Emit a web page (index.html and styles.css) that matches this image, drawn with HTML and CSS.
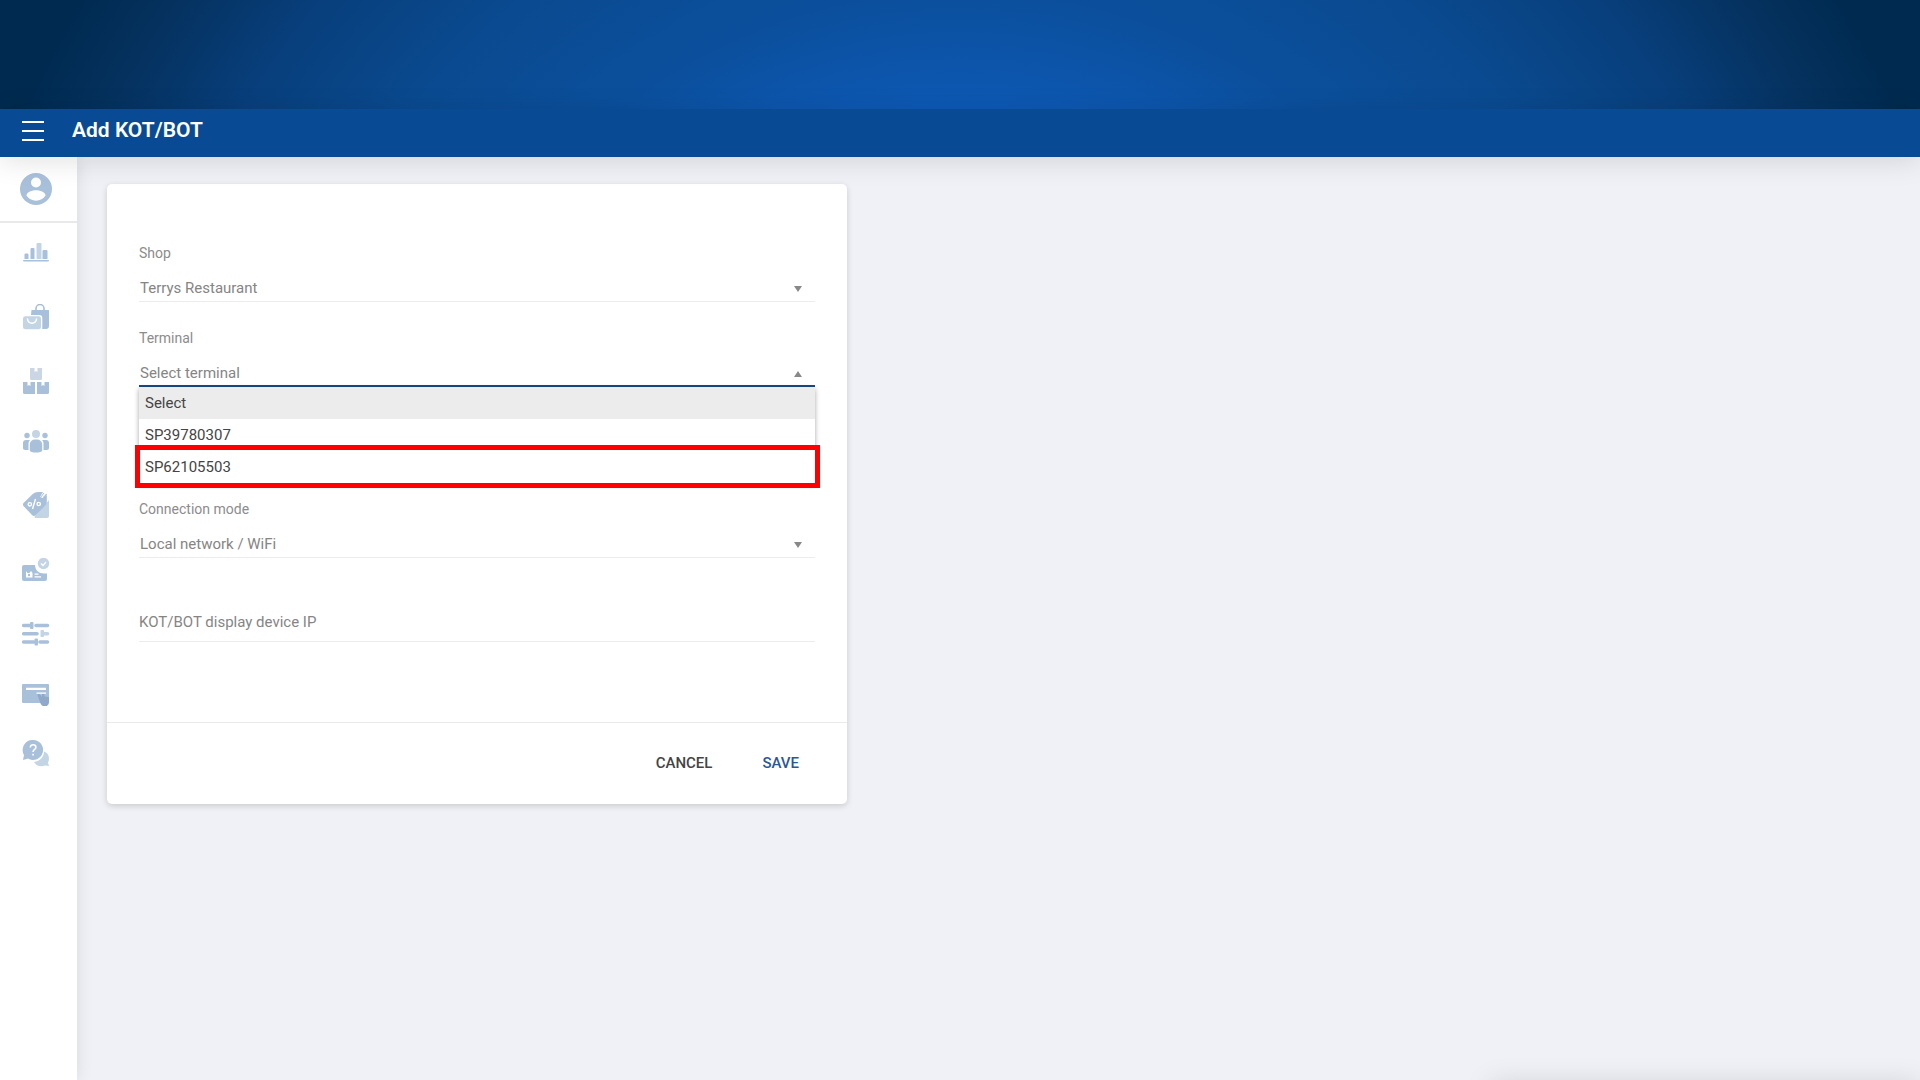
FILE: index.html
```html
<!DOCTYPE html>
<html lang="en">
<head>
    <meta charset="UTF-8">
    <meta name="viewport" content="width=device-width, initial-scale=1.0">
    <title>Add KOT/BOT</title>
    <link rel="stylesheet" href="styles.css">
</head>
<body>
    <div class="banner"></div>

    <header class="topbar">
        <button class="menu-btn" type="button" aria-label="Menu">
            <svg width="22" height="20" viewBox="0 0 22 20"><path d="M0 1h22M0 10h22M0 19h22" stroke="#fff" stroke-width="2"/></svg>
        </button>
        <h1>Add KOT/BOT</h1>
    </header>

    <div class="layout">
        <!-- Sidebar -->
        <nav class="sidebar">
            <a class="profile" href="#" aria-label="Profile">
                <svg width="32" height="32" viewBox="0 0 32 32">
                    <circle class="dark" cx="16" cy="16" r="16"/>
                    <circle cx="16" cy="9.5" r="5" fill="#fff"/>
                    <path d="M6.5 22.500c0-3.500 6-5.300 9.500-5.300s9.500 1.800 9.500 5.300c-2 3.200-5.500 5.200-9.500 5.200s-7.500-2-9.500-5.200z" fill="#fff"/>
                </svg>
            </a>
            <div class="menu">
                <a href="#" aria-label="Reports">
                    <svg width="28" height="27" viewBox="0 0 28 27">
                        <path class="dark" d="M2.500 11.500a1 1 0 0 1 1-1h2a1 1 0 0 1 1 1V16h-4zM8.500 6a1 1 0 0 1 1-1h2a1 1 0 0 1 1 1v10h-4zM20.500 8a1 1 0 0 1 1-1h3a1 1 0 0 1 1 1v8h-5z"/>
                        <path class="light" d="M14.500 1a1 1 0 0 1 1-1h3a1 1 0 0 1 1 1v15h-5z"/>
                        <rect class="dark" x="1" y="17" width="26" height="1.600" rx=".8"/>
                    </svg>
                </a>
                <a href="#" aria-label="Sales">
                    <svg width="28" height="30" viewBox="0 0 28 30">
                        <path d="M14 6V4.500a4 4 0 0 1 8 0V6" fill="none" stroke="#a8b9d2" stroke-width="1.500"/>
                        <path class="dark" d="M9.500 6h17a.5.5 0 0 1 .5.500V22a3 3 0 0 1-3 3h-3.700V14a3 3 0 0 0-3-3H9z"/>
                        <rect class="light" x="1" y="12.300" width="18" height="13" rx="2.500"/>
                        <path d="M5.500 15c.5 5.500 8.500 5.500 9 0" fill="none" stroke="#fff" stroke-width="1.500" stroke-linecap="round"/>
                    </svg>
                </a>
                <a href="#" aria-label="Inventory">
                    <svg width="28" height="28" viewBox="0 0 28 28">
                        <path class="grey" d="M8 0h4.500v4l1.500-1 1.500 1V0H20v10.500a1.500 1.500 0 0 1-1.500 1.500h-9A1.500 1.500 0 0 1 8 10.500z"/>
                        <path class="dark" d="M1 14h4.500v4l1.500-1 1.500 1v-4H13v12H2.500A1.500 1.500 0 0 1 1 24.500zM15 14h4.500v4l1.500-1 1.500 1v-4H27v10.500a1.500 1.500 0 0 1-1.500 1.500H15z"/>
                    </svg>
                </a>
                <a href="#" aria-label="Customers">
                    <svg width="28" height="28" viewBox="0 0 28 28">
                        <circle class="dark" cx="5" cy="5.500" r="2.700"/>
                        <circle class="dark" cx="23" cy="5.500" r="2.700"/>
                        <circle class="light" cx="14" cy="4" r="4"/>
                        <path class="dark" d="M1 13a3 3 0 0 1 3-3h4c-1 1-1.500 2.500-1.500 4v6H3a2 2 0 0 1-2-2zM27 13a3 3 0 0 0-3-3h-4c1 1 1.500 2.500 1.500 4v6H25a2 2 0 0 0 2-2zM7.800 14.500a5 5 0 0 1 5-5h2.400a5 5 0 0 1 5 5v5.700c0 1.500-3 2.300-6.200 2.300s-6.200-.8-6.200-2.300z"/>
                    </svg>
                </a>
                <a href="#" aria-label="Discounts">
                    <svg width="28" height="32" viewBox="0 0 28 32">
                        <path class="light" d="M27 8v16a2 2 0 0 1-2 2H14c-1.500 0-2-1-1-2z"/>
                        <path class="dark" d="M1.500 11 11 1.800Q13 0 16 0h5l-3 5 3 1 3-4 .8 2v6q0 2-1.500 3.500L14 23q-2 2-4 0l-8.500-9q-1.200-1.500 0-3z"/>
                        <path d="M21 5.500l4-3.500M22 1l-3.500 4.500" stroke="#a9c0db" fill="none"/>
                        <path d="M13.500 7l-3 10" stroke="#fff" stroke-width="1.400"/>
                        <circle cx="7.800" cy="12.300" r="1.700" fill="none" stroke="#fff" stroke-width="1.300"/>
                        <circle cx="16.700" cy="12" r="1.700" fill="none" stroke="#fff" stroke-width="1.300"/>
                    </svg>
                </a>
                <a href="#" aria-label="Membership">
                    <svg width="28" height="30" viewBox="0 0 28 30">
                        <path class="dark" d="M2 7h11c0 5 4 8.500 9 8.500h3V21a2 2 0 0 1-2 2H2a2 2 0 0 1-2-2V9a2 2 0 0 1 2-2z"/>
                        <circle class="light" cx="21.500" cy="5.500" r="5.700"/>
                        <path d="M19 5.500l2 2 3-3.500" fill="none" stroke="#fff" stroke-width="1.200"/>
                        <path d="M4 19.500V13l1.500 2h2L9 13l1.500 2v4.500zM12.500 15.500h4v1.300h-4zM12.500 18.300h6.500v1.300h-6.500z" fill="#fff"/>
                        <circle class="dark" cx="7" cy="17" r="1.200"/>
                    </svg>
                </a>
                <a href="#" aria-label="Settings">
                    <svg width="28" height="28" viewBox="0 0 28 28">
                        <g class="lines">
                            <path d="M1.700 3.500H8M14 3.500h11.500M1.700 11.700H15M1.700 20H12M18 20h7.500"/>
                            <path class="soft" d="M22 11.700h3.500"/>
                        </g>
                        <rect class="dark" x="8" y="0" width="3.500" height="7" rx="1"/>
                        <rect class="light" x="18.500" y="8" width="3.500" height="7" rx="1"/>
                        <rect class="dark" x="12.500" y="16.500" width="3.500" height="7" rx="1"/>
                    </svg>
                </a>
                <a href="#" aria-label="Payments">
                    <svg width="28" height="22" viewBox="0 0 28 22">
                        <rect class="dark" width="27" height="19" rx="1"/>
                        <path d="M4 3.700h20v2.200H4zM14.500 8.500h9.500v1.300h-9.500z" fill="#fff"/>
                        <path d="M15.500 11c0-1.500 2-1.500 3 0l1.500 2v-3h2.500v2.500L27 13v5c0 3-2 4.500-4.500 4.500-2 0-3-1.500-4-3z" fill="#90a9c9"/>
                    </svg>
                </a>
                <a href="#" aria-label="Help">
                    <svg width="28" height="28" viewBox="0 0 28 28">
                        <path class="light" d="M22 11.500c3 1 5 3.500 5 7 0 1.800-.5 3-1 4l1 3.500-4-.5c-4 1.500-9 .5-11-3.500 6-1 10-5 10-10.500z"/>
                        <path class="dark" d="M11 0a10 10 0 1 1-5 18.600L1 20l1-5A10 10 0 0 1 11 0z"/>
                        <path d="M8.300 7.500c0-3.800 5.600-3.500 5.600-.2 0 2.200-2.800 2.200-2.800 4.700M11.100 13.800v1.700" fill="none" stroke="#fff" stroke-width="1.600"/>
                    </svg>
                </a>
            </div>
        </nav>

        <!-- Form -->
        <main class="content">
            <form class="card">
                <div class="card-body">
                    <div class="field">
                        <label for="shop">Shop</label>
                        <div class="select-wrap">
                            <select id="shop">
                                <option>Terrys Restaurant</option>
                            </select>
                        </div>
                    </div>
                    <div class="field">
                        <label for="terminal">Terminal</label>
                        <div class="select-wrap open">
                            <select id="terminal">
                                <option>Select terminal</option>
                            </select>
                            <ul class="options" role="listbox" aria-label="Terminal">
                                <li class="active" role="option">Select</li>
                                <li role="option">SP39780307</li>
                                <li class="highlight" role="option">SP62105503</li>
                            </ul>
                        </div>
                    </div>
                    <div class="field connection">
                        <label for="mode">Connection mode</label>
                        <div class="select-wrap">
                            <select id="mode">
                                <option>Local network / WiFi</option>
                            </select>
                        </div>
                    </div>
                    <input class="text-input" type="text" id="deviceIp" placeholder="KOT/BOT display device IP" aria-label="KOT/BOT display device IP">
                </div>
                <div class="card-footer">
                    <button class="btn" type="button">CANCEL</button>
                    <button class="btn primary" type="submit">SAVE</button>
                </div>
            </form>
        </main>
    </div>

    <div class="snackbar"></div>
</body>
</html>
```

FILE: styles.css
```css
* {
    box-sizing: border-box;
}
body {
    margin: 0;
    font-family: Roboto, "Liberation Sans", sans-serif;
    min-height: 100vh;
    display: flex;
    flex-direction: column;
    background: #f0f1f6;
    overflow: hidden;
}
.banner {
    height: 109px;
    background: radial-gradient(circle 1100px at 50% 540px, #0e5cba 36%, #0d57b0 41%, #0b4f9c 50%, #0a4a90 63%, #083f7c 76%, #053260 86%, #002a50 94%);
}

/* Top bar */
.topbar {
    display: flex;
    align-items: center;
    gap: 28px;
    height: 48px;
    padding: 0 22px 6px;
    background: #084b94;
    box-shadow: 0 4px 28px rgba(0, 0, 0, 0.12);
    position: relative;
    z-index: 2;
}
.topbar h1 {
    margin: 0;
    font-size: 21px;
    line-height: 24px;
    font-weight: 600;
    color: #fff;
}
.menu-btn {
    padding: 2px 0 0;
    border: 0;
    background: none;
    display: flex;
    cursor: pointer;
}

/* Sidebar */
.layout {
    display: flex;
    flex: 1;
}
.sidebar {
    width: 77px;
    background: #fff;
    box-shadow: 0 0 16px rgba(0, 0, 0, 0.1);
}
.sidebar svg {
    display: block;
}
.profile {
    display: block;
    padding: 16px 20px;
    border-bottom: 2px solid #e9e9ec;
}
.menu {
    display: flex;
    flex-direction: column;
    gap: 34px;
    padding: 20px 22px;
}
.dark {
    fill: #a9c0db;
}
.light {
    fill: #c3d5e5;
}
.grey {
    fill: #cbd6e4;
}
.lines {
    fill: none;
    stroke: #a9c0db;
    stroke-width: 3.6;
    stroke-linecap: round;
}
.lines .soft {
    stroke: #c3d5e5;
}

/* Card */
.content {
    flex: 1;
    padding: 27px 30px;
}
.card {
    max-width: 740px;
    background: #fff;
    border-radius: 5px;
    box-shadow: 0 2px 6px rgba(0, 0, 0, 0.16);
}
.card-body {
    padding: 59px 32px 80px;
}
.field {
    margin-bottom: 26px;
}
.field label {
    display: block;
    margin-bottom: 11px;
    font-size: 14px;
    line-height: 20px;
    color: #8c8c8c;
}
.field.connection {
    margin-top: 112px;
    margin-bottom: 46px;
}
.select-wrap {
    position: relative;
}
.select-wrap::after {
    content: "";
    position: absolute;
    right: 13px;
    top: 12px;
    border: 4px solid transparent;
    border-top: 6px solid #888;
    border-bottom: 0;
    pointer-events: none;
}
.select-wrap.open::after {
    border-top: 0;
    border-bottom: 6px solid #888;
}
select {
    appearance: none;
    display: block;
    width: 100%;
    height: 28px;
    padding: 0 1px;
    border: 0;
    border-bottom: 1px solid #ececee;
    border-radius: 0;
    background: none;
    font-family: inherit;
    font-size: 15px;
    color: #858585;
}
.open select {
    padding-top: 2px;
    border-bottom: 2px solid #174a87;
}
.options {
    position: absolute;
    top: 100%;
    left: 0;
    right: 0;
    z-index: 1;
    margin: 0;
    padding: 0;
    list-style: none;
    background: #fff;
    box-shadow: 0 2px 5px rgba(0, 0, 0, 0.35);
}
.options li {
    position: relative;
    height: 32px;
    padding: 0 6px;
    font-size: 15px;
    line-height: 32px;
    color: #444;
}
.options .active {
    background: #ececec;
}
.options .highlight::after {
    content: "";
    position: absolute;
    inset: -6px -5px -5px -4px;
    border: 5px solid #f00;
}
.text-input {
    display: block;
    width: 100%;
    height: 38px;
    padding: 0 0 2px;
    border: 0;
    border-bottom: 1px solid #ececee;
    background: none;
    font-family: inherit;
    font-size: 15px;
    color: #444;
}
.text-input::placeholder {
    color: #858585;
}
.card-footer {
    display: flex;
    justify-content: flex-end;
    gap: 18px;
    padding: 22px 32px 23px;
    border-top: 1px solid #e8eaec;
}
.btn {
    height: 36px;
    padding: 0 16px;
    border: 0;
    background: none;
    font-family: inherit;
    font-size: 15px;
    font-weight: 500;
    color: #444;
    cursor: pointer;
}
.btn.primary {
    color: #2b5797;
}

.snackbar {
    position: fixed;
    right: 0;
    bottom: -24px;
    width: 430px;
    height: 20px;
    box-shadow: 0 0 28px rgba(0, 0, 0, 0.15);
}
```
